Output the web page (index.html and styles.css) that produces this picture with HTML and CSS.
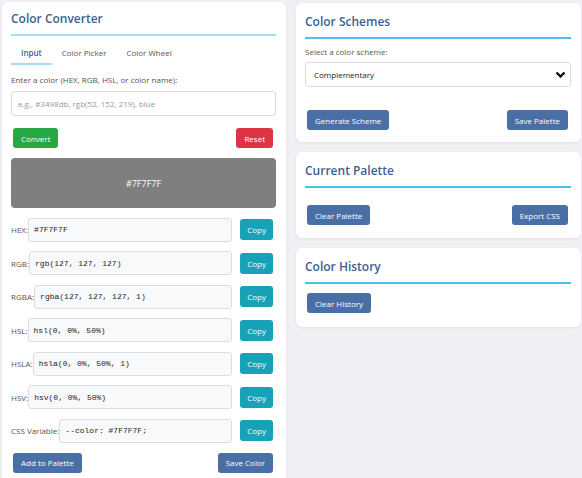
FILE: index.html
```html
<!DOCTYPE html>
<html lang="en">
<head>
  <meta charset="UTF-8">
  <title>Color Converter</title>
  <meta name="viewport" content="width=device-width, initial-scale=1.0">
  <link rel="stylesheet" href="styles.css">
</head>
<body>
  <div class="layout">

    <!-- Converter panel -->
    <div class="card converter">
      <h2 class="card-title">Color Converter</h2>

      <div class="tabs">
        <span class="tab active">Input</span>
        <span class="tab">Color Picker</span>
        <span class="tab">Color Wheel</span>
      </div>

      <label class="field-label">Enter a color (HEX, RGB, HSL, or color name):</label>
      <input class="text-input" type="text" placeholder="e.g., #3498db, rgb(52, 152, 219), blue">

      <div class="btn-row">
        <button class="btn btn-green">Convert</button>
        <button class="btn btn-red">Reset</button>
      </div>

      <div class="color-display">#7F7F7F</div>

      <div class="value-row">
        <span class="value-label">HEX:</span>
        <div class="value-box">#7F7F7F</div>
        <button class="btn btn-teal">Copy</button>
      </div>
      <div class="value-row">
        <span class="value-label">RGB:</span>
        <div class="value-box">rgb(127, 127, 127)</div>
        <button class="btn btn-teal">Copy</button>
      </div>
      <div class="value-row">
        <span class="value-label">RGBA:</span>
        <div class="value-box">rgba(127, 127, 127, 1)</div>
        <button class="btn btn-teal">Copy</button>
      </div>
      <div class="value-row">
        <span class="value-label">HSL:</span>
        <div class="value-box">hsl(0, 0%, 50%)</div>
        <button class="btn btn-teal">Copy</button>
      </div>
      <div class="value-row">
        <span class="value-label">HSLA:</span>
        <div class="value-box">hsla(0, 0%, 50%, 1)</div>
        <button class="btn btn-teal">Copy</button>
      </div>
      <div class="value-row">
        <span class="value-label">HSV:</span>
        <div class="value-box">hsv(0, 0%, 50%)</div>
        <button class="btn btn-teal">Copy</button>
      </div>
      <div class="value-row">
        <span class="value-label">CSS Variable:</span>
        <div class="value-box">--color: #7F7F7F;</div>
        <button class="btn btn-teal">Copy</button>
      </div>

      <div class="btn-row bottom">
        <button class="btn btn-blue">Add to Palette</button>
        <button class="btn btn-blue">Save Color</button>
      </div>
    </div>

    <!-- Right column -->
    <div class="side">
      <div class="card schemes">
        <h2 class="card-title">Color Schemes</h2>
        <label class="field-label">Select a color scheme:</label>
        <div class="select">
          <span>Complementary</span>
          <svg width="11" height="8" viewBox="0 0 11 8"><path d="M1.5 1.5 L5.5 5.5 L9.5 1.5" fill="none" stroke="#111" stroke-width="2.4"/></svg>
        </div>
        <div class="btn-row scheme-btns">
          <button class="btn btn-blue">Generate Scheme</button>
          <button class="btn btn-blue">Save Palette</button>
        </div>
      </div>

      <div class="card palette">
        <h2 class="card-title">Current Palette</h2>
        <div class="btn-row palette-btns">
          <button class="btn btn-blue">Clear Palette</button>
          <button class="btn btn-blue">Export CSS</button>
        </div>
      </div>

      <div class="card history">
        <h2 class="card-title">Color History</h2>
        <div class="btn-row history-btns">
          <button class="btn btn-blue">Clear History</button>
        </div>
      </div>
    </div>

  </div>
</body>
</html>
```

FILE: styles.css
```css
/* Basic styling */
body {
  margin: 0;
  padding: 2px 1px 0 2px;
  background-color: #eef0f4;
  font-family: "Open Sans", "Noto Sans", sans-serif;
  color: #444;
  overflow: hidden;
}
.layout {
  display: grid;
  grid-template-columns: 284px 285px;
  gap: 10px;
  align-items: start;
}
.side {
  display: flex;
  flex-direction: column;
  gap: 10px;
  padding-top: 1px;
}

/* Cards */
.card {
  background-color: #fff;
  border-radius: 6px;
  box-shadow: 0 1px 3px rgba(0, 0, 0, 0.06);
  padding: 11px 10px 13px 9px;
}
.converter {
  height: 490px;
  padding-top: 9px;
}
.card-title {
  margin: 0;
  font-size: 12px;
  font-weight: 600;
  color: #3d5f91;
  padding-bottom: 7px;
  border-bottom: 2px solid #4fbfea;
  line-height: 16px;
}
.converter .card-title {
  border-bottom-color: #a7dcf6;
  margin-bottom: 9px;
}

/* Tabs */
.tabs {
  display: flex;
  font-size: 8px;
  margin-bottom: 9px;
}
.tab {
  padding: 2px 10px 5px;
  color: #555;
}
.tab.active {
  color: #3d5f91;
  font-weight: 600;
  border-bottom: 2px solid #a7dcf6;
}

/* Form */
.field-label {
  display: block;
  font-size: 8px;
  color: #555;
  margin-bottom: 6px;
}
.text-input {
  display: block;
  box-sizing: border-box;
  width: 100%;
  height: 25px;
  border: 1px solid #ddd;
  border-radius: 3px;
  padding: 0 6px;
  font-family: inherit;
  font-size: 8px;
}
.text-input::placeholder {
  color: #999;
}

/* Buttons */
.btn-row {
  display: flex;
  justify-content: space-between;
  padding: 0 3px 0 2px;
}
.btn {
  border: none;
  border-radius: 3px;
  color: #fff;
  font-family: inherit;
  font-size: 8px;
  height: 20px;
  padding: 0 8px;
  cursor: pointer;
}
.btn-green { background-color: #28a745; }
.btn-red { background-color: #dc3545; }
.btn-teal { background-color: #17a2b8; }
.btn-blue { background-color: #4a6fa5; }

.converter .btn-row {
  margin-top: 12px;
}

/* Color display */
.color-display {
  margin-top: 10px;
  height: 50px;
  border-radius: 4px;
  background-color: #7f7f7f;
  color: #fff;
  font-size: 9px;
  display: flex;
  align-items: center;
  justify-content: center;
}

/* Value rows */
.value-row {
  display: flex;
  align-items: center;
  margin-top: 9.5px;
}
.value-label {
  font-size: 8px;
  color: #555;
}
.value-box {
  flex: 1;
  height: 24px;
  box-sizing: border-box;
  border: 1px solid #ddd;
  border-radius: 3px;
  background-color: #f8f9fa;
  display: flex;
  align-items: center;
  padding: 0 5px;
  font-family: "Liberation Mono", monospace;
  font-size: 8px;
  color: #222;
}
.value-row .btn {
  height: 21px;
  padding: 0 7px;
  margin: 0 3px 0 8px;
}
.converter .btn-row.bottom {
  margin-top: 10px;
}

/* Right column cards */
.schemes {
  padding-bottom: 12px;
}
.schemes .field-label {
  margin: 7px 0 5px;
}
.select {
  display: flex;
  align-items: center;
  justify-content: space-between;
  height: 25px;
  box-sizing: border-box;
  border: 1px solid #ddd;
  border-radius: 3px;
  padding: 0 4px 0 8px;
  font-size: 8px;
  color: #222;
}
.scheme-btns {
  margin-top: 23px;
}
.palette-btns {
  margin-top: 17px;
}
.history {
  padding-bottom: 14px;
}
.history-btns {
  margin-top: 9px;
}
```
